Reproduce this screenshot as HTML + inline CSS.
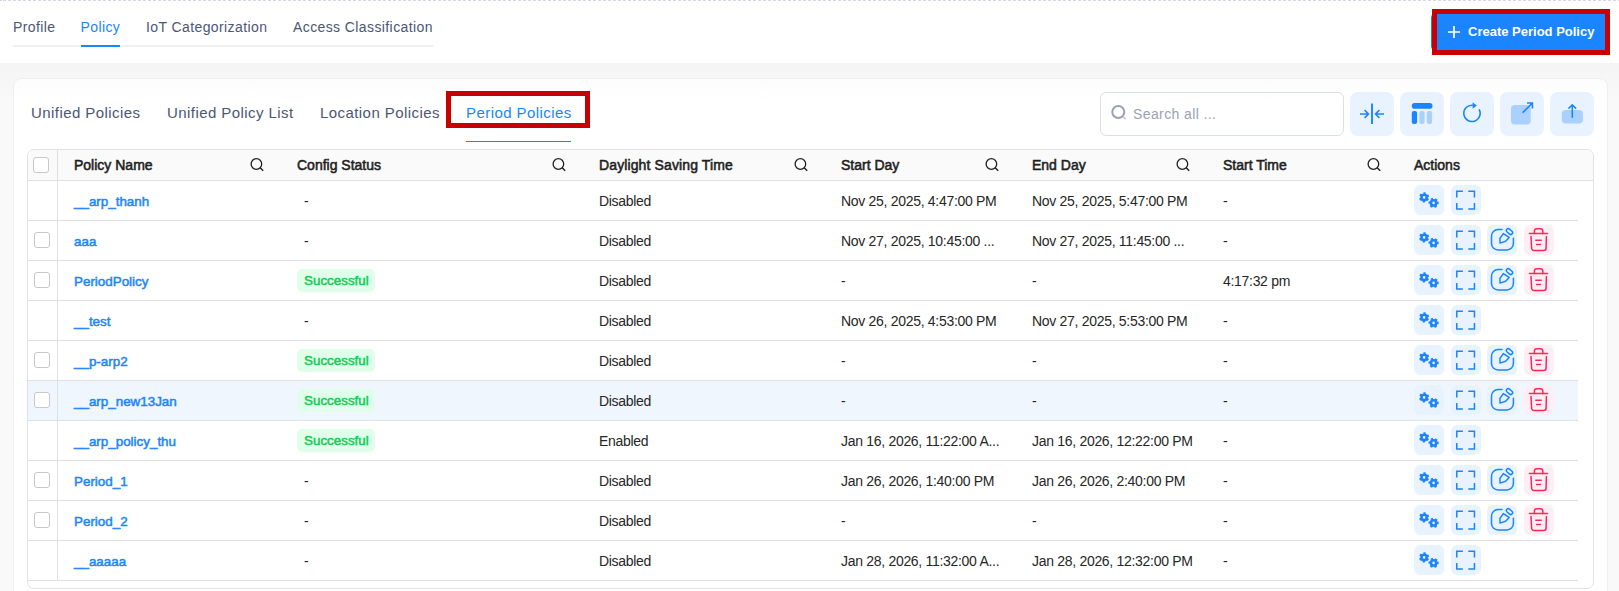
<!DOCTYPE html>
<html><head><meta charset="utf-8">
<style>
*{box-sizing:border-box;margin:0;padding:0}
html,body{width:1619px;height:591px;overflow:hidden;background:#fff;font-family:"Liberation Sans",sans-serif}
.abs{position:absolute}
#dash{left:0;top:0;width:1619px;height:1px;background:repeating-linear-gradient(to right,#d3d8e4 0 3px,transparent 3px 5px);background-position:3px 0}
.ttab{position:absolute;top:17px;font-size:14px;line-height:20px;color:#4b5675;white-space:nowrap;letter-spacing:0.4px}
#gray{left:0;top:63px;width:1619px;height:528px;background:#f9f9f9}
#shade{left:0;top:63px;width:1619px;height:40px;background:linear-gradient(to bottom,rgba(0,0,0,0.018),rgba(0,0,0,0));z-index:5;pointer-events:none}
#card{left:13px;top:78px;width:1595px;height:540px;background:#fff;border:1px solid #f1f1f3;border-radius:8px}
.itab{position:absolute;top:103px;font-size:15px;line-height:20px;color:#4b5675;white-space:nowrap;letter-spacing:0.43px}
.redbox{position:absolute;border:5px solid #c80000}
#search{left:1100px;top:92px;width:244px;height:44px;border:1px solid #dbdfe9;border-radius:6px;background:#fff}
.tb{position:absolute;top:92px;width:44px;height:44px;border-radius:8px;background:#e9f3ff}
.tb svg{position:absolute;left:0;top:0}
#table{left:27px;top:149px;width:1567px;height:440px;border:1px solid #e2e2e2;border-radius:7px;background:#fff;overflow:hidden}
#thead{position:absolute;left:28px;top:150px;width:1565px;height:31px;border-radius:6px 6px 0 0;background:#fafafa;border-bottom:1px solid #e0e0e0}
.th{position:absolute;top:150px;font-size:14px;line-height:30px;color:#1f1f1f;white-space:nowrap;-webkit-text-stroke:0.55px #1f1f1f}
.row{position:absolute;left:28px;width:1550px;height:40px;border-bottom:1px solid #e0e0e0}
.td{position:absolute;font-size:14px;letter-spacing:-0.3px;line-height:40px;color:#262626;white-space:nowrap}
.lnk{color:#1b84ff;-webkit-text-stroke:0.5px #1b84ff;font-size:13.4px;letter-spacing:0}
.badge{position:absolute;height:23px;width:78px;border-radius:5px;background:#dfffea;color:#17c653;font-size:13.4px;letter-spacing:0;-webkit-text-stroke:0.45px #17c653;line-height:23px;padding-left:7px;white-space:nowrap}
.cb{position:absolute;left:33px;width:16px;height:16px;border:1px solid #c8c8c8;border-radius:3px;background:#fff}
.ab{position:absolute;width:30px;height:30px;border-radius:6px;background:#e9f3ff}
.ab.red{background:#ffeef3}
.ab svg{position:absolute;left:0;top:0}
#vdiv{left:57px;top:150px;width:1px;height:430px;background:#e0e0e0}
</style></head>
<body>
<svg width="0" height="0" style="position:absolute">
<defs>
<symbol id="hs" viewBox="0 0 14 14"><circle cx="6.4" cy="6" r="5.3" fill="none" stroke="#1f1f1f" stroke-width="1.3"/><path d="M10.2 9.8 L13.2 12.8" stroke="#1f1f1f" stroke-width="1.4"/></symbol>
<symbol id="gear" viewBox="0 0 30 30">
<g fill="none" stroke="#1b84ff">
<circle cx="10.1" cy="12.4" r="4.15" stroke-width="1.9" stroke-dasharray="2.17 2.17" transform="rotate(15 10.1 12.4)"/>
<circle cx="10.1" cy="12.4" r="2.6" stroke-width="2.6"/>
<circle cx="19.6" cy="17.9" r="4.15" stroke-width="1.9" stroke-dasharray="2.17 2.17" transform="rotate(-15 19.6 17.9)"/>
<circle cx="19.6" cy="17.9" r="2.6" stroke-width="2.6"/>
</g></symbol>
<symbol id="exp" viewBox="0 0 30 30"><path fill="none" stroke="#1b84ff" stroke-width="1.5" d="M5.75 12.4V6.25H11.9M17.3 6.25H23.45V12.4M5.75 18.1V24.05H11.9M17.3 24.05H23.45V18.1"/></symbol>
<symbol id="edit" viewBox="0 0 30 30"><g fill="none" stroke="#1b84ff" stroke-width="1.5" stroke-linejoin="round" stroke-linecap="round"><path d="M15 4.6H11A6.5 6.5 0 0 0 4.5 11.1V18.4A6.5 6.5 0 0 0 11 24.9H19.9A6.5 6.5 0 0 0 26.4 18.4V13.2"/><path d="M13 18.1L12.9 13.5L16.3 8.6L22.2 12.4L18.6 16.3Z"/><rect x="-3.5" y="-1.85" width="7" height="3.7" rx="1.85" transform="translate(22.5 6.6) rotate(40)"/></g></symbol>
<symbol id="trash" viewBox="0 0 30 30"><g fill="none" stroke="#f8285a" stroke-width="1.5" stroke-linecap="round" stroke-linejoin="round"><path d="M5.4 8.6H23.6"/><path d="M10.4 8.4V6.1A2.4 2.4 0 0 1 12.8 3.7H16.4A2.4 2.4 0 0 1 18.8 6.1V8.4"/><path d="M7 11.4L7.6 23A2.5 2.5 0 0 0 10.1 25.5H19.6A2.5 2.5 0 0 0 22.1 23L22.4 11.4"/><path d="M11.8 15.3H17.2M12.6 19.6H16.4"/></g></symbol>
</defs></svg>

<div id="dash" class="abs"></div>
<div class="ttab" style="left:13px">Profile</div>
<div class="ttab" style="left:80.5px;color:#1b84ff">Policy</div>
<div class="ttab" style="left:146px">IoT Categorization</div>
<div class="ttab" style="left:293px">Access Classification</div>
<div class="abs" style="left:13px;top:45px;width:421px;height:2px;background:#f1f1f4"></div>
<div class="abs" style="left:81px;top:45px;width:39px;height:2px;background:#1b84ff"></div>

<div class="abs" style="left:1431px;top:12px;width:176px;height:40px;border-radius:6px;background:#1b84ff"></div>
<div class="redbox" style="left:1432px;top:9px;width:178px;height:46px"></div>
<svg class="abs" style="left:1447px;top:25px" width="14" height="14" viewBox="0 0 14 14"><path d="M7 1V13M1 7H13" stroke="#fff" stroke-width="1.7"/></svg>
<div class="abs" style="left:1468px;top:22px;font-size:13px;line-height:20px;font-weight:bold;color:#fff;white-space:nowrap">Create Period Policy</div>

<div id="gray" class="abs"></div>
<div id="card" class="abs"></div>
<div id="shade" class="abs"></div>

<div class="itab" style="left:31px">Unified Policies</div>
<div class="itab" style="left:167px">Unified Policy List</div>
<div class="itab" style="left:320px">Location Policies</div>
<div class="itab" style="left:466px;color:#1b84ff">Period Policies</div>
<div class="abs" style="left:466px;top:141px;width:105px;height:1px;background:#1b84ff"></div>
<div class="redbox" style="left:446px;top:91px;width:144px;height:37px"></div>

<div id="search" class="abs"></div>
<svg class="abs" style="left:1110px;top:104px" width="18" height="18" viewBox="0 0 18 18"><circle cx="8.3" cy="8" r="6" fill="none" stroke="#99a1b7" stroke-width="2"/><path d="M13 12.7L15.6 15.3" stroke="#c4c9d6" stroke-width="1.6"/></svg>
<div class="abs" style="left:1133px;top:104px;font-size:14px;line-height:20px;color:#99a1b7;white-space:nowrap;letter-spacing:0.4px">Search all ...</div>

<div class="tb" style="left:1350px"><svg width="44" height="44" viewBox="0 0 44 44"><g fill="none" stroke="#1b84ff" stroke-width="1.6"><path d="M22 11.4V32" stroke-width="1.9"/><path d="M10 22H18.5M14.6 18.1L18.5 22L14.6 25.9M34 22H25.5M29.4 18.1L25.5 22L29.4 25.9"/></g></svg></div>
<div class="tb" style="left:1400px"><svg width="44" height="44" viewBox="0 0 44 44"><rect x="11.8" y="11.1" width="20.7" height="5.6" rx="2.8" fill="#1b84ff"/><rect x="11.8" y="19" width="5.3" height="13" rx="2.1" fill="#1b84ff"/><rect x="19.3" y="19" width="5.3" height="13" rx="2.1" fill="#a9d0ff"/><rect x="26.8" y="19" width="5.3" height="13" rx="2.1" fill="#a9d0ff"/></svg></div>
<div class="tb" style="left:1450px"><svg width="44" height="44" viewBox="0 0 44 44"><path d="M22.8 13.2A8.2 8.2 0 1 0 29.1 17.3" fill="none" stroke="#1b84ff" stroke-width="1.55"/><path d="M22.6 10.2V16.8L26.8 13.5Z" fill="#1b84ff"/></svg></div>
<div class="tb" style="left:1500px"><svg width="44" height="44" viewBox="0 0 44 44"><rect x="11" y="13" width="19.7" height="19.4" rx="3.6" fill="#a9d0ff"/><path d="M22.6 20.8L32.4 11M27 11H32.4V16.4" fill="none" stroke="#1b84ff" stroke-width="1.6"/></svg></div>
<div class="tb" style="left:1550px"><svg width="44" height="44" viewBox="0 0 44 44"><rect x="11.8" y="18" width="21.1" height="13.6" rx="4" fill="#a9d0ff"/><path d="M22.3 12.8V25.7M18.5 16.6L22.3 12.8L26.1 16.6" fill="none" stroke="#1b84ff" stroke-width="1.6"/></svg></div>

<div id="table" class="abs"></div>
<div id="thead"></div>
<div class="row" style="top:181px;height:40px;"></div>
<div class="row" style="top:221px;height:40px;"></div>
<div class="row" style="top:261px;height:40px;"></div>
<div class="row" style="top:301px;height:40px;"></div>
<div class="row" style="top:341px;height:40px;"></div>
<div class="row" style="top:381px;height:40px;background:#eff6fd;"></div>
<div class="row" style="top:421px;height:40px;"></div>
<div class="row" style="top:461px;height:40px;"></div>
<div class="row" style="top:501px;height:40px;"></div>
<div class="row" style="top:541px;height:40px;"></div>
<div id="vdiv" class="abs"></div>
<div class="cb" style="top:157px"></div>
<div class="th" style="left:74px">Policy Name</div>
<svg class="abs" style="left:250px;top:158px" width="14" height="14"><use href="#hs"/></svg>
<div class="th" style="left:297px">Config Status</div>
<svg class="abs" style="left:552px;top:158px" width="14" height="14"><use href="#hs"/></svg>
<div class="th" style="left:599px;letter-spacing:0.12px">Daylight Saving Time</div>
<svg class="abs" style="left:794px;top:158px" width="14" height="14"><use href="#hs"/></svg>
<div class="th" style="left:841px">Start Day</div>
<svg class="abs" style="left:985px;top:158px" width="14" height="14"><use href="#hs"/></svg>
<div class="th" style="left:1032px">End Day</div>
<svg class="abs" style="left:1176px;top:158px" width="14" height="14"><use href="#hs"/></svg>
<div class="th" style="left:1223px">Start Time</div>
<svg class="abs" style="left:1367px;top:158px" width="14" height="14"><use href="#hs"/></svg>
<div class="th" style="left:1414px">Actions</div>

<div class="td lnk" style="left:74px;top:182px">__arp_thanh</div>
<div class="td" style="left:304px;top:181px">-</div>
<div class="td" style="left:599px;top:181px">Disabled</div>
<div class="td" style="left:841px;top:181px">Nov 25, 2025, 4:47:00 PM</div>
<div class="td" style="left:1032px;top:181px">Nov 25, 2025, 5:47:00 PM</div>
<div class="td" style="left:1223px;top:181px">-</div>
<div class="ab" style="left:1414px;top:185px"><svg width="30" height="30"><use href="#gear"/></svg></div>
<div class="ab" style="left:1451px;top:185px"><svg width="30" height="30"><use href="#exp"/></svg></div>
<div class="cb" style="left:34px;top:232px"></div>
<div class="td lnk" style="left:74px;top:222px">aaa</div>
<div class="td" style="left:304px;top:221px">-</div>
<div class="td" style="left:599px;top:221px">Disabled</div>
<div class="td" style="left:841px;top:221px">Nov 27, 2025, 10:45:00 ...</div>
<div class="td" style="left:1032px;top:221px">Nov 27, 2025, 11:45:00 ...</div>
<div class="td" style="left:1223px;top:221px">-</div>
<div class="ab" style="left:1414px;top:225px"><svg width="30" height="30"><use href="#gear"/></svg></div>
<div class="ab" style="left:1451px;top:225px"><svg width="30" height="30"><use href="#exp"/></svg></div>
<div class="ab" style="left:1487px;top:225px"><svg width="30" height="30"><use href="#edit"/></svg></div>
<div class="ab red" style="left:1524px;top:225px"><svg width="30" height="30"><use href="#trash"/></svg></div>
<div class="cb" style="left:34px;top:272px"></div>
<div class="td lnk" style="left:74px;top:262px">PeriodPolicy</div>
<div class="badge" style="left:297px;top:269px">Successful</div>
<div class="td" style="left:599px;top:261px">Disabled</div>
<div class="td" style="left:841px;top:261px">-</div>
<div class="td" style="left:1032px;top:261px">-</div>
<div class="td" style="left:1223px;top:261px">4:17:32 pm</div>
<div class="ab" style="left:1414px;top:265px"><svg width="30" height="30"><use href="#gear"/></svg></div>
<div class="ab" style="left:1451px;top:265px"><svg width="30" height="30"><use href="#exp"/></svg></div>
<div class="ab" style="left:1487px;top:265px"><svg width="30" height="30"><use href="#edit"/></svg></div>
<div class="ab red" style="left:1524px;top:265px"><svg width="30" height="30"><use href="#trash"/></svg></div>
<div class="td lnk" style="left:74px;top:302px">__test</div>
<div class="td" style="left:304px;top:301px">-</div>
<div class="td" style="left:599px;top:301px">Disabled</div>
<div class="td" style="left:841px;top:301px">Nov 26, 2025, 4:53:00 PM</div>
<div class="td" style="left:1032px;top:301px">Nov 27, 2025, 5:53:00 PM</div>
<div class="td" style="left:1223px;top:301px">-</div>
<div class="ab" style="left:1414px;top:305px"><svg width="30" height="30"><use href="#gear"/></svg></div>
<div class="ab" style="left:1451px;top:305px"><svg width="30" height="30"><use href="#exp"/></svg></div>
<div class="cb" style="left:34px;top:352px"></div>
<div class="td lnk" style="left:74px;top:342px">__p-arp2</div>
<div class="badge" style="left:297px;top:349px">Successful</div>
<div class="td" style="left:599px;top:341px">Disabled</div>
<div class="td" style="left:841px;top:341px">-</div>
<div class="td" style="left:1032px;top:341px">-</div>
<div class="td" style="left:1223px;top:341px">-</div>
<div class="ab" style="left:1414px;top:345px"><svg width="30" height="30"><use href="#gear"/></svg></div>
<div class="ab" style="left:1451px;top:345px"><svg width="30" height="30"><use href="#exp"/></svg></div>
<div class="ab" style="left:1487px;top:345px"><svg width="30" height="30"><use href="#edit"/></svg></div>
<div class="ab red" style="left:1524px;top:345px"><svg width="30" height="30"><use href="#trash"/></svg></div>
<div class="cb" style="left:34px;top:392px"></div>
<div class="td lnk" style="left:74px;top:382px">__arp_new13Jan</div>
<div class="badge" style="left:297px;top:389px">Successful</div>
<div class="td" style="left:599px;top:381px">Disabled</div>
<div class="td" style="left:841px;top:381px">-</div>
<div class="td" style="left:1032px;top:381px">-</div>
<div class="td" style="left:1223px;top:381px">-</div>
<div class="ab" style="left:1414px;top:385px"><svg width="30" height="30"><use href="#gear"/></svg></div>
<div class="ab" style="left:1451px;top:385px"><svg width="30" height="30"><use href="#exp"/></svg></div>
<div class="ab" style="left:1487px;top:385px"><svg width="30" height="30"><use href="#edit"/></svg></div>
<div class="ab red" style="left:1524px;top:385px"><svg width="30" height="30"><use href="#trash"/></svg></div>
<div class="td lnk" style="left:74px;top:422px">__arp_policy_thu</div>
<div class="badge" style="left:297px;top:429px">Successful</div>
<div class="td" style="left:599px;top:421px">Enabled</div>
<div class="td" style="left:841px;top:421px">Jan 16, 2026, 11:22:00 A...</div>
<div class="td" style="left:1032px;top:421px">Jan 16, 2026, 12:22:00 PM</div>
<div class="td" style="left:1223px;top:421px">-</div>
<div class="ab" style="left:1414px;top:425px"><svg width="30" height="30"><use href="#gear"/></svg></div>
<div class="ab" style="left:1451px;top:425px"><svg width="30" height="30"><use href="#exp"/></svg></div>
<div class="cb" style="left:34px;top:472px"></div>
<div class="td lnk" style="left:74px;top:462px">Period_1</div>
<div class="td" style="left:304px;top:461px">-</div>
<div class="td" style="left:599px;top:461px">Disabled</div>
<div class="td" style="left:841px;top:461px">Jan 26, 2026, 1:40:00 PM</div>
<div class="td" style="left:1032px;top:461px">Jan 26, 2026, 2:40:00 PM</div>
<div class="td" style="left:1223px;top:461px">-</div>
<div class="ab" style="left:1414px;top:465px"><svg width="30" height="30"><use href="#gear"/></svg></div>
<div class="ab" style="left:1451px;top:465px"><svg width="30" height="30"><use href="#exp"/></svg></div>
<div class="ab" style="left:1487px;top:465px"><svg width="30" height="30"><use href="#edit"/></svg></div>
<div class="ab red" style="left:1524px;top:465px"><svg width="30" height="30"><use href="#trash"/></svg></div>
<div class="cb" style="left:34px;top:512px"></div>
<div class="td lnk" style="left:74px;top:502px">Period_2</div>
<div class="td" style="left:304px;top:501px">-</div>
<div class="td" style="left:599px;top:501px">Disabled</div>
<div class="td" style="left:841px;top:501px">-</div>
<div class="td" style="left:1032px;top:501px">-</div>
<div class="td" style="left:1223px;top:501px">-</div>
<div class="ab" style="left:1414px;top:505px"><svg width="30" height="30"><use href="#gear"/></svg></div>
<div class="ab" style="left:1451px;top:505px"><svg width="30" height="30"><use href="#exp"/></svg></div>
<div class="ab" style="left:1487px;top:505px"><svg width="30" height="30"><use href="#edit"/></svg></div>
<div class="ab red" style="left:1524px;top:505px"><svg width="30" height="30"><use href="#trash"/></svg></div>
<div class="td lnk" style="left:74px;top:542px">__aaaaa</div>
<div class="td" style="left:304px;top:541px">-</div>
<div class="td" style="left:599px;top:541px">Disabled</div>
<div class="td" style="left:841px;top:541px">Jan 28, 2026, 11:32:00 A...</div>
<div class="td" style="left:1032px;top:541px">Jan 28, 2026, 12:32:00 PM</div>
<div class="td" style="left:1223px;top:541px">-</div>
<div class="ab" style="left:1414px;top:545px"><svg width="30" height="30"><use href="#gear"/></svg></div>
<div class="ab" style="left:1451px;top:545px"><svg width="30" height="30"><use href="#exp"/></svg></div>
</body></html>
